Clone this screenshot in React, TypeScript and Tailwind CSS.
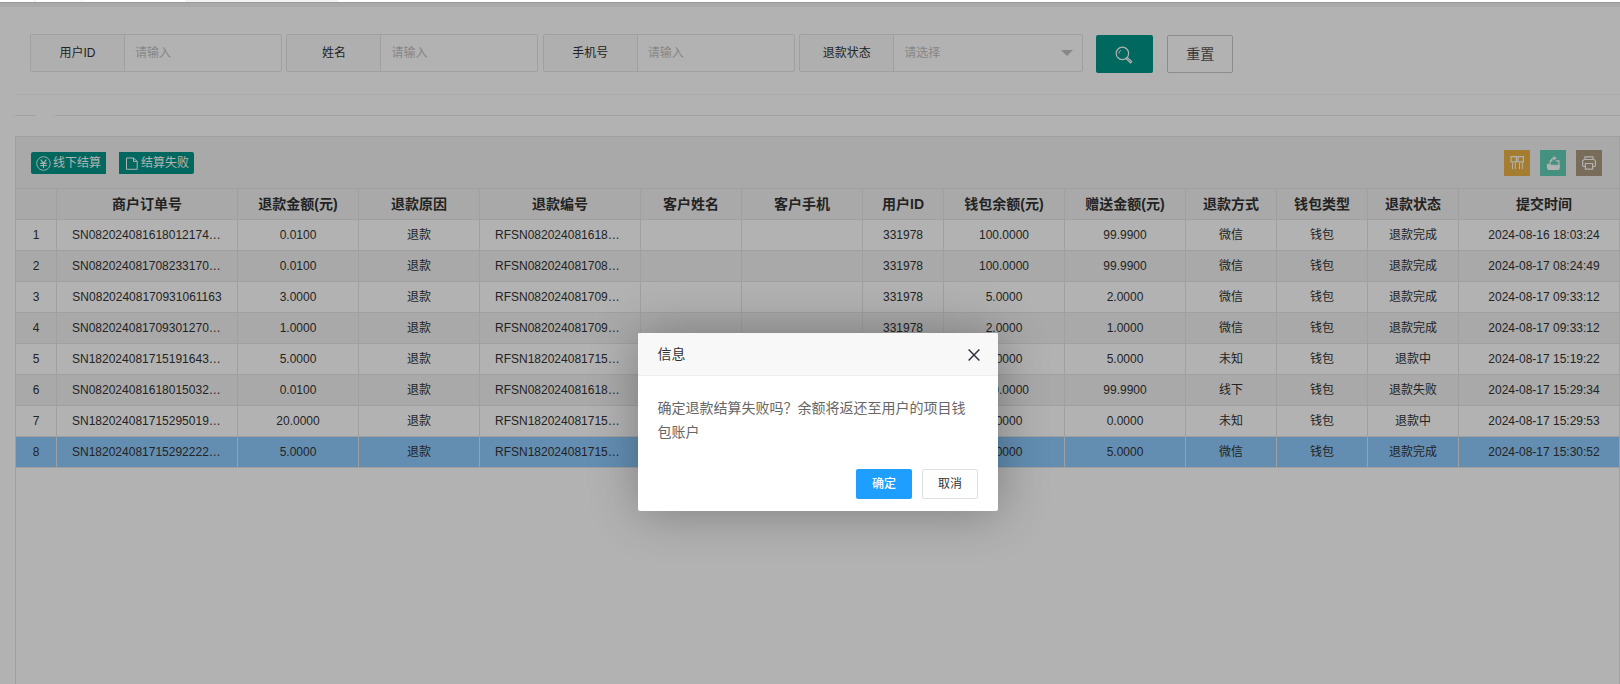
import type { ReactNode } from "react";

const columns = [
  { title: "", width: "w-[41px]" },
  { title: "商户订单号", width: "w-[181px]" },
  { title: "退款金额(元)", width: "w-[121px]" },
  { title: "退款原因", width: "w-[121px]" },
  { title: "退款编号", width: "w-[161px]" },
  { title: "客户姓名", width: "w-[101px]" },
  { title: "客户手机", width: "w-[121px]" },
  { title: "用户ID", width: "w-[81px]" },
  { title: "钱包余额(元)", width: "w-[121px]" },
  { title: "赠送金额(元)", width: "w-[121px]" },
  { title: "退款方式", width: "w-[91px]" },
  { title: "钱包类型", width: "w-[91px]" },
  { title: "退款状态", width: "w-[91px]" },
  { title: "提交时间", width: "w-[171px]" },
];

const rows = [
  ["1", "SN082024081618012174…", "0.0100", "退款", "RFSN082024081618…", "", "", "331978", "100.0000", "99.9900", "微信", "钱包", "退款完成", "2024-08-16 18:03:24"],
  ["2", "SN082024081708233170…", "0.0100", "退款", "RFSN082024081708…", "", "", "331978", "100.0000", "99.9900", "微信", "钱包", "退款完成", "2024-08-17 08:24:49"],
  ["3", "SN08202408170931061163", "3.0000", "退款", "RFSN082024081709…", "", "", "331978", "5.0000", "2.0000", "微信", "钱包", "退款完成", "2024-08-17 09:33:12"],
  ["4", "SN082024081709301270…", "1.0000", "退款", "RFSN082024081709…", "", "", "331978", "2.0000", "1.0000", "微信", "钱包", "退款完成", "2024-08-17 09:33:12"],
  ["5", "SN182024081715191643…", "5.0000", "退款", "RFSN182024081715…", "", "", "", "5.0000", "5.0000", "未知", "钱包", "退款中", "2024-08-17 15:19:22"],
  ["6", "SN082024081618015032…", "0.0100", "退款", "RFSN082024081618…", "", "", "", "100.0000", "99.9900", "线下", "钱包", "退款失败", "2024-08-17 15:29:34"],
  ["7", "SN182024081715295019…", "20.0000", "退款", "RFSN182024081715…", "", "", "", "0.0000", "0.0000", "未知", "钱包", "退款中", "2024-08-17 15:29:53"],
  ["8", "SN182024081715292222…", "5.0000", "退款", "RFSN182024081715…", "", "", "", "5.0000", "5.0000", "微信", "钱包", "退款完成", "2024-08-17 15:30:52"],
];

function Field({ label, placeholder, select }: { label: string; placeholder: string; select?: boolean }) {
  return (
    <div
      className={`flex h-[38px] rounded-[2px] border border-[#e6e6e6] text-xs ${select ? "w-[284px]" : "w-[252px]"}`}
    >
      <div className="flex w-[94px] items-center justify-center border-r border-[#e6e6e6] bg-[#fbfbfb] text-[#333]">
        {label}
      </div>
      <div className="flex flex-1 items-center justify-between pr-[9px] pl-[10px] text-[#c2c2c2]">
        {placeholder}
        {select && (
          <span className="border-x-[6px] border-t-[6px] border-x-transparent border-t-[#c2c2c2]" />
        )}
      </div>
    </div>
  );
}

function ToolIcon({ className, children }: { className: string; children: ReactNode }) {
  return (
    <button className={`flex size-[26px] items-center justify-center ${className}`}>
      <svg width="16" height="16" viewBox="0 0 16 16" fill="none" stroke="#fff" strokeWidth="1.2">
        {children}
      </svg>
    </button>
  );
}

function SearchBar() {
  return (
    <div className="flex h-[88px] border-b border-[#f6f6f6] pt-[27px] pl-[15px]">
      <div className="flex gap-[4.4px]">
        <Field label="用户ID" placeholder="请输入" />
        <Field label="姓名" placeholder="请输入" />
        <Field label="手机号" placeholder="请输入" />
        <Field label="退款状态" placeholder="请选择" select />
      </div>
      <button className="mt-px ml-[13px] flex h-[38px] w-[57px] items-center justify-center rounded-[2px] bg-[#009688] pt-px pr-px">
        <svg width="18" height="18" viewBox="0 0 18 18" fill="none" stroke="#fff" strokeWidth="1.2">
          <circle cx="7.4" cy="7.4" r="6.2" />
          <path d="M3.9 7.6a3.3 3.3 0 0 1 2.2-3.3" strokeWidth="0.9" />
          <path d="m11.9 11.2 4.8 4.3-1.2 1.3-4.8-4.4" />
        </svg>
      </button>
      <button className="mt-px ml-[14px] h-[38px] w-[66px] rounded-[2px] border border-[#c9c9c9] text-sm text-[#555]">
        重置
      </button>
    </div>
  );
}

function Toolbar() {
  return (
    <div className="flex h-[52px] justify-between border-b border-[#e6e6e6] bg-[#f2f2f2] pr-[17px] pl-[15px]">
      <div className="flex gap-[13px] pt-[15px] text-xs text-white">
        <button className="flex h-[22px] w-[75px] items-center rounded-l-[2px] bg-[#009688] pl-[5px]">
          <svg width="15" height="15" viewBox="0 0 15 15" fill="none" stroke="#fff" className="mr-[2px] shrink-0">
            <circle cx="7.5" cy="7.5" r="6.8" strokeWidth="0.9" />
            <path d="m4.6 3.7 2.9 3.5 2.9-3.5M7.5 7.2v4.7M4.3 7.4h6.4M4.3 9.5h6.4" strokeWidth="1.1" />
          </svg>
          线下结算
        </button>
        <button className="flex h-[22px] w-[75px] items-center rounded-r-[2px] bg-[#009688] pl-[7px]">
          <svg width="12" height="13" viewBox="0 0 12 13" fill="none" stroke="#fff" className="mr-[3px] shrink-0">
            <path d="M.5 1h7l3.7 3.4v7.9H.5zM7.5 1v3.4h3.7" />
          </svg>
          结算失败
        </button>
      </div>
      <div className="flex gap-[10px] pt-[13px]">
        <ToolIcon className="bg-[#ebb446]">
          <path d="M2 1.6h5.4v5.2H2zM9 1.6h5.4v5.2H9z" />
          <path d="M3.5 8v6.2M6.3 8v6.2M10.5 8v6.2M13.3 8v6.2" strokeWidth="1" />
        </ToolIcon>
        <ToolIcon className="bg-[#64d0b8]">
          <path d="M2.2 9.3h3.2l1 1h8.2v1.2l-.8 3H3z" fill="#fff" strokeWidth="1" />
          <path d="M5.2 8.8V5.9h2.2M10.7 5.9h3.2v4M5.8 6.3C6.3 4.2 7.4 3.2 9 3.1" />
          <path d="m8.5.8 3.2 2.4-3.2 2.4z" fill="#fff" stroke="none" />
        </ToolIcon>
        <ToolIcon className="bg-[#ae9b82]">
          <path d="M4 4.5V1.8h8v2.7M4 11.5H2.8a1.2 1.2 0 0 1-1.2-1.2V6.5a2 2 0 0 1 2-2h8.8a2 2 0 0 1 2 2v3.8a1.2 1.2 0 0 1-1.2 1.2H12" />
          <path d="M4.4 8.5h7.2v5.7H4.4z" />
        </ToolIcon>
      </div>
    </div>
  );
}

function RefundTable() {
  return (
    <div className="mt-[20px] flex-1 overflow-hidden border border-b-0 border-[#e6e6e6]">
      <Toolbar />
      <div className="w-[1614px]">
        <div className="flex h-[31px] border-b border-[#e6e6e6] bg-[#f2f2f2] text-sm font-bold text-[#333]">
          {columns.map((col) => (
            <div
              key={col.title}
              className={`flex shrink-0 items-center justify-center border-r border-[#e6e6e6] ${col.width}`}
            >
              {col.title}
            </div>
          ))}
        </div>
        {rows.map((row, i) => (
          <div
            key={row[0]}
            className={`flex h-[31px] border-b border-[#e6e6e6] text-xs leading-[30px] text-[#333] ${
              i === 7 ? "bg-[#8fccff]" : i % 2 ? "bg-[#f2f2f2]" : "bg-white"
            }`}
          >
            {row.map((cell, j) => (
              <div
                key={j}
                className={`shrink-0 border-r border-[#e6e6e6] whitespace-nowrap ${columns[j].width} ${
                  cell.endsWith("…") ? "pl-[15px]" : "text-center"
                }`}
              >
                {cell}
              </div>
            ))}
          </div>
        ))}
      </div>
    </div>
  );
}

function ConfirmDialog() {
  return (
    <div className="absolute top-[333px] left-[638px] h-[178px] w-[360px] rounded-[2px] bg-white shadow-[1px_1px_50px_rgba(0,0,0,0.3)]">
      <div className="flex h-[43px] items-center justify-between rounded-t-[2px] border-b border-[#eee] bg-[#f8f8f8] pr-[18px] pl-[19.5px] text-sm text-[#333]">
        信息
        <svg width="12" height="12" viewBox="0 0 12 12" stroke="#2e2d3c" strokeWidth="1.4" className="mt-[2px]">
          <path d="m.6.6 10.8 10.8M11.4.6.6 11.4" />
        </svg>
      </div>
      <p className="pt-5 pr-5 pl-[19.5px] text-sm leading-6 text-[#666]">
        确定退款结算失败吗？余额将返还至用户的项目钱包账户
      </p>
      <div className="mt-[25px] flex justify-end gap-[10px] pr-5 text-xs">
        <button className="h-[30px] w-[56px] rounded-[2px] bg-[#1e9fff] font-medium text-white">
          确定
        </button>
        <button className="h-[30px] w-[56px] rounded-[2px] border border-[#dedede] text-[#333]">
          取消
        </button>
      </div>
    </div>
  );
}

export default function App() {
  return (
    <div className="relative flex h-[684px] w-[1620px] flex-col overflow-hidden bg-white font-['Liberation_Sans','Noto_Sans_CJK_SC',sans-serif]">
      <div className="flex h-[2px] shrink-0">
        <div className="w-[35px] border-r border-[#eee]" />
        <div className="w-[47px] border-r border-[#eee]" />
        <div className="ml-[103px] w-[153px] bg-[#f2f2f2]" />
      </div>
      <div className="h-[5px] shrink-0 border-t border-[#dcdcdc] bg-[#f2f2f2]" />
      <div className="flex flex-1 flex-col pl-[15px]">
        <SearchBar />
        <div className="mt-[20px] flex h-px gap-[20px]">
          <div className="w-[20px] bg-[#e6e6e6]" />
          <div className="flex-1 bg-[#e6e6e6]" />
        </div>
        <RefundTable />
      </div>
      <div className="absolute inset-x-0 top-[2px] bottom-0 bg-black/30" />
      <ConfirmDialog />
    </div>
  );
}
